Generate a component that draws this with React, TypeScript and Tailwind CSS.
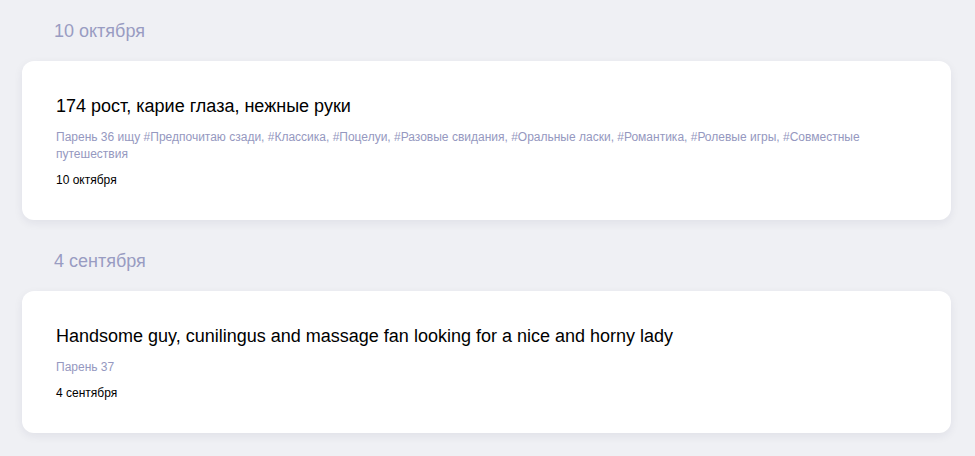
import React from "react";

interface Post {
  day: string;
  title: string;
  meta: string;
}

const posts: Post[] = [
  {
    day: "10 октября",
    title: "174 рост, карие глаза, нежные руки",
    meta: "Парень 36 ищу #Предпочитаю сзади, #Классика, #Поцелуи, #Разовые свидания, #Оральные ласки, #Романтика, #Ролевые игры, #Совместные путешествия",
  },
  {
    day: "4 сентября",
    title: "Handsome guy, cunilingus and massage fan looking for a nice and horny lady",
    meta: "Парень 37",
  },
];

const PostCard: React.FC<{ post: Post }> = ({ post }) => (
  <div className="bg-white rounded-xl px-[34px] pt-8 pb-[31px] shadow-[0_3px_10px_rgba(30,35,70,0.07)]">
    <h3 className="text-[18px] leading-[27px] text-black">{post.title}</h3>
    <p className="mt-[9px] text-[12px] leading-[17px] text-[#9598c0]">{post.meta}</p>
    <p className="mt-[9px] text-[12px] leading-[17px] text-black">{post.day}</p>
  </div>
);

export default function App() {
  return (
    <div
      className="min-h-screen bg-[#eff0f4] pl-[22px] pr-6 pt-[18px] pb-6"
      style={{ fontFamily: '"Liberation Sans", Arial, sans-serif' }}
    >
      <div className="flex flex-col gap-[28px]">
        {posts.map((post) => (
          <section key={post.day}>
            <h2 className="pl-8 mb-4 text-[18px] leading-[27px] text-[#999cc2]">
              {post.day}
            </h2>
            <PostCard post={post} />
          </section>
        ))}
      </div>
    </div>
  );
}
